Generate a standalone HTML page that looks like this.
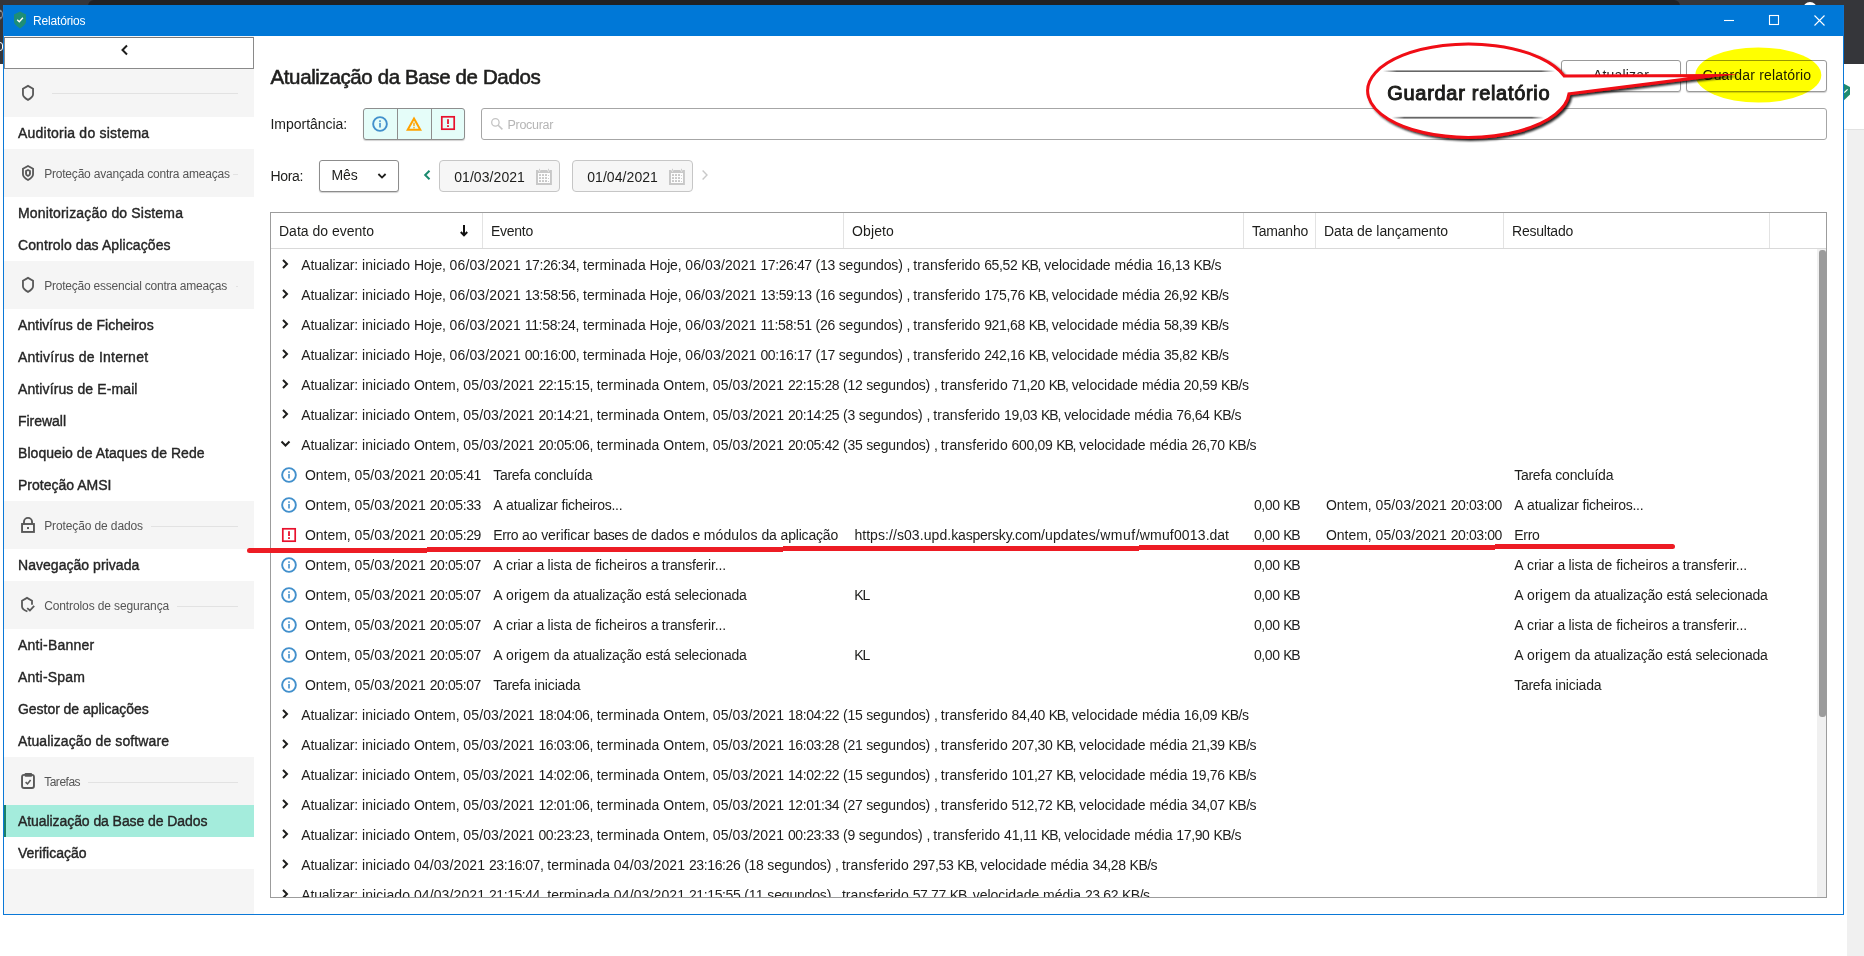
<!DOCTYPE html>
<html lang="pt">
<head>
<meta charset="utf-8">
<title>Relatórios</title>
<style>
*{box-sizing:border-box;margin:0;padding:0}
html,body{width:1864px;height:956px;overflow:hidden;background:#fff}
body{position:relative;font-family:"Liberation Sans",sans-serif;font-size:14px;color:#1d1d1b}
.abs{position:absolute}
.t{position:absolute;white-space:nowrap;line-height:20px;height:20px}
#bgtop{left:0;top:0;width:1864px;height:65px;background:#35363a}
#bgtop2{left:88px;top:0;width:1592px;height:6px;background:#202124;border-radius:8px 8px 0 0}
#bgright{left:1847px;top:130px;width:17px;height:826px;background:#f0f0f0}
#win{left:3px;top:5px;width:1841px;height:910px;background:#fff;border:1px solid #0a78d7}
#title{left:4px;top:5px;width:1839px;height:31px;background:#0078d7}
.ttl{color:#fff;font-size:12px}
#side{left:4px;top:36px;width:250px;height:878px;background:#f5f5f5}
#back{left:4px;top:37px;width:250px;height:32px;background:#fff;border:1px solid #8a8a8a;border-top-color:#777}
.wrow{position:absolute;left:4px;width:250px;background:#fff}
.item{font-size:14px;color:#262626;-webkit-text-stroke:0.38px #262626}
.sec{font-size:12px;color:#555}
.sline{position:absolute;height:1px;background:#e2e2e2}
#sel{left:4px;top:805px;width:250px;height:32px;background:#a4ecdc;border-left:2px solid #1a8068}
.h1{font-size:20.5px;-webkit-text-stroke:0.6px #262626;line-height:28px;height:28px;color:#1d1d1b}
.btn{position:absolute;background:#fff;border:1px solid #999;border-radius:3px;box-shadow:0 1px 1px rgba(0,0,0,.18)}
.gr{}
.big{font-size:20px;line-height:28px;height:28px;-webkit-text-stroke:1px #1d1d1b}
.ph{color:#b5b5b5;font-size:12.5px}
.date{font-size:14px}
#tbl{left:270px;top:212px;width:1557px;height:686px;border:1px solid #9c9c9c;background:#fff;overflow:hidden}
.hsep{position:absolute;top:213px;width:1px;height:35px;background:#e3e3e3}
</style>
</head>
<body>
<div id="bgtop" class="abs"></div>
<div id="bgtop2" class="abs"></div>
<div class="abs" style="left:0;top:64.3px;width:4px;height:892px;background:#fff"></div>
<div class="abs" style="left:1844px;top:64.3px;width:20px;height:66px;background:#fff"></div>
<div id="bgright" class="abs"></div>
<div class="abs" style="left:1844px;top:129px;width:20px;height:1px;background:#e2e2e2"></div>
<svg class="abs" style="left:1844px;top:82px" width="8" height="20" viewBox="1844 82 8 20"><path d="M1844 83.800 L1850 87 V94.500 L1844 100.300 Z" fill="#1e8a70"/><path d="M1844.300 92.600 L1847.600 89.400" stroke="#fff" stroke-width="1.200"/></svg>
<div class="abs" style="left:1803px;top:2px;width:14px;height:8px;background:#fff;border-radius:7px 7px 0 0"></div>
<div class="abs" style="left:-7px;top:8.500px;width:10px;height:11px;border:1.600px solid #8b8e93;border-radius:50%"></div>
<div class="abs" style="left:-5px;top:10px;width:6px;height:1.500px;background:#8b8e93"></div><div class="abs" style="left:-5px;top:16.500px;width:6px;height:1.500px;background:#8b8e93"></div>
<div class="abs" style="left:-6px;top:42px;width:9px;height:8.500px;border:1.500px solid #fff;border-radius:3px"></div>
<div id="win" class="abs"></div>
<div id="title" class="abs">
<svg class="abs" style="left:9px;top:6px" width="14" height="18" viewBox="0 0 14 18"><path d="M7 0.4 L13 3.4 V10.8 Q13 13.6 7 17.4 Q1 13.6 1 10.8 V3.4 Z" fill="#1e8e76"/><path d="M4.2 8.8 L6.3 10.8 L9.9 6.8" fill="none" stroke="#fff" stroke-width="1.4"/></svg>
<svg class="abs" style="left:1708px;top:0" width="127" height="31" viewBox="0 0 127 31"><g stroke="#fff" stroke-width="1.1" fill="none"><path d="M12 15.500 H22"/><rect x="57.500" y="10.500" width="9" height="9"/><path d="M102.500 10.500 L112.500 20.500 M112.500 10.500 L102.500 20.500"/></g></svg>
</div>
<div class="t ttl" style="left:33px;top:10.5px;letter-spacing:-0.163px;">Relatórios</div>
<div id="side" class="abs"></div>
<div id="back" class="abs"><svg class="abs" style="left:115px;top:6px" width="10" height="12" viewBox="0 0 10 12"><path d="M7 1.5 L2.5 6 L7 10.5" fill="none" stroke="#1d1d1b" stroke-width="2"/></svg></div>
<div class="wrow" style="top:117px;height:32px"></div>
<div class="wrow" style="top:197px;height:64px"></div>
<div class="wrow" style="top:309px;height:192px"></div>
<div class="wrow" style="top:549px;height:32px"></div>
<div class="wrow" style="top:629px;height:128px"></div>
<div class="wrow" style="top:837px;height:32px"></div>
<div id="sel" class="abs"></div>
<div class="t item" style="left:18px;top:123px;letter-spacing:0.223px;">Auditoria do sistema</div>
<div class="t item" style="left:18px;top:203px;letter-spacing:0.168px;">Monitorização do Sistema</div>
<div class="t item" style="left:18px;top:235px;letter-spacing:0.109px;">Controlo das Aplicações</div>
<div class="t item" style="left:18px;top:315px;letter-spacing:0.050px;">Antivírus de Ficheiros</div>
<div class="t item" style="left:18px;top:347px;letter-spacing:0.238px;">Antivírus de Internet</div>
<div class="t item" style="left:18px;top:379px;letter-spacing:0.111px;">Antivírus de E-mail</div>
<div class="t item" style="left:18px;top:411px;letter-spacing:-0.029px;">Firewall</div>
<div class="t item" style="left:18px;top:443px;letter-spacing:0.049px;">Bloqueio de Ataques de Rede</div>
<div class="t item" style="left:18px;top:475px;letter-spacing:0.008px;">Proteção AMSI</div>
<div class="t item" style="left:18px;top:555px;letter-spacing:0.039px;">Navegação privada</div>
<div class="t item" style="left:18px;top:635px;letter-spacing:0.233px;">Anti-Banner</div>
<div class="t item" style="left:18px;top:667px;letter-spacing:0.193px;">Anti-Spam</div>
<div class="t item" style="left:18px;top:699px;letter-spacing:-0.042px;">Gestor de aplicações</div>
<div class="t item" style="left:18px;top:731px;letter-spacing:0.107px;">Atualização de software</div>
<div class="t item" style="left:18px;top:811px;letter-spacing:-0.074px;">Atualização da Base de Dados</div>
<div class="t item" style="left:18px;top:843px;letter-spacing:0.001px;">Verificação</div>
<svg class="abs" style="left:20px;top:83px" width="16" height="18" viewBox="0 0 16 18"><path d="M8 2.9 L13.05 5.7 V11.2 Q13.05 14 8 16.9 Q2.95 14 2.95 11.2 V5.7 Z" fill="none" stroke="#585858" stroke-width="1.8" stroke-linejoin="miter"/></svg>
<div class="sline" style="left:52px;top:93px;width:186px"></div>
<svg class="abs" style="left:20px;top:164px" width="16" height="18" viewBox="0 0 16 18"><path d="M8 1.95 L13.05 4.75 V10.2 Q13.05 13 8 15.95 Q2.95 13 2.95 10.2 V4.75 Z" fill="none" stroke="#585858" stroke-width="1.8"/><path d="M8 6 L9.95 7 V10 Q9.95 11 8 12 Q6.05 11 6.05 10 V7 Z" fill="none" stroke="#585858" stroke-width="1.9"/></svg>
<div class="t sec" style="left:44.2px;top:164px;letter-spacing:-0.207px;">Proteção avançada contra ameaças</div>
<div class="sline" style="left:233px;top:174px;width:5px"></div>
<svg class="abs" style="left:20px;top:275px" width="16" height="18" viewBox="0 0 16 18"><path d="M8 2.9 L13.05 5.7 V11.2 Q13.05 14 8 16.9 Q2.95 14 2.95 11.2 V5.7 Z" fill="none" stroke="#585858" stroke-width="1.8" stroke-linejoin="miter"/></svg>
<div class="t sec" style="left:44.2px;top:276px;letter-spacing:-0.221px;">Proteção essencial contra ameaças</div>
<div class="sline" style="left:236px;top:286px;width:2px"></div>
<svg class="abs" style="left:20px;top:516px" width="16" height="18" viewBox="0 0 16 18"><rect x="2.05" y="8" width="11.9" height="7.95" fill="none" stroke="#585858" stroke-width="1.9"/><path d="M3.95 8 V5.95 A4.05 4.05 0 0 1 12.05 5.95 V8" fill="none" stroke="#585858" stroke-width="1.9"/><rect x="7" y="11.05" width="2" height="2" fill="#585858"/></svg>
<div class="t sec" style="left:44.2px;top:516px;letter-spacing:-0.115px;">Proteção de dados</div>
<div class="sline" style="left:151px;top:526px;width:87px"></div>
<svg class="abs" style="left:20px;top:596px" width="16" height="18" viewBox="0 0 16 18"><path d="M12 8.8 V4.8 L7 1.9 L2 4.8 V10.4 Q2 13.2 7.4 15.5" fill="none" stroke="#585858" stroke-width="1.8"/><path d="M7.2 12.1 L9.9 14.5 L14.2 9.9" fill="none" stroke="#585858" stroke-width="1.8"/></svg>
<div class="t sec" style="left:44.2px;top:596px;letter-spacing:-0.115px;">Controlos de segurança</div>
<div class="sline" style="left:177px;top:606px;width:61px"></div>
<svg class="abs" style="left:20px;top:772px" width="16" height="18" viewBox="0 0 16 18"><rect x="2.05" y="2.85" width="11.9" height="13.1" rx="2" fill="none" stroke="#585858" stroke-width="1.9"/><rect x="4.5" y="0.95" width="7.700" height="3.7" rx="1.2" fill="#585858"/><path d="M5.6 10.1 L7.5 11.9 L10.6 7.9" fill="none" stroke="#585858" stroke-width="1.6"/></svg>
<div class="t sec" style="left:44.2px;top:772px;letter-spacing:-0.494px;">Tarefas</div>
<div class="sline" style="left:88px;top:782px;width:150px"></div>
<div class="t h1" style="left:270.5px;top:63px;letter-spacing:-0.377px;">Atualização da Base de Dados</div>
<div class="t" style="left:270.5px;top:114px;letter-spacing:-0.029px;">Importância:</div>
<div class="t" style="left:270.5px;top:166px;letter-spacing:-0.347px;">Hora:</div>
<div class="btn" style="left:363px;top:108px;width:102px;height:32px;background:#e5fdf9;border-color:#8e8e8e"></div>
<div class="abs" style="left:397px;top:109px;width:1px;height:30px;background:#8e8e8e"></div>
<div class="abs" style="left:431px;top:109px;width:1px;height:30px;background:#8e8e8e"></div>
<svg class="abs" style="left:372px;top:116px" width="16" height="16" viewBox="0 0 16 16"><circle cx="8" cy="8" r="6.85" fill="none" stroke="#4290cc" stroke-width="1.9"/><rect x="7.2" y="6.9" width="1.6" height="4.6" fill="#4290cc"/><rect x="7.2" y="4.3" width="1.6" height="1.6" fill="#4290cc"/></svg>
<svg class="abs" style="left:406px;top:116px" width="16" height="16" viewBox="0 0 16 16"><path d="M8 2.6 L14.3 13.8 H1.7 Z" fill="none" stroke="#ffa200" stroke-width="2" stroke-linejoin="miter"/><rect x="7.300" y="6.6" width="1.4" height="3.600" fill="#ffa200"/><rect x="7.300" y="11" width="1.4" height="1.400" fill="#ffa200"/></svg>
<svg class="abs" style="left:440px;top:115px" width="16" height="16" viewBox="0 0 16 16"><rect x="1.8" y="1.8" width="12.4" height="12.4" fill="none" stroke="#e8112d" stroke-width="1.7"/><rect x="7.1" y="4.2" width="1.8" height="4.8" fill="#e8112d"/><rect x="7.1" y="10.200" width="1.8" height="1.8" fill="#e8112d"/></svg>
<div class="btn" style="left:481px;top:108px;width:1346px;height:32px;box-shadow:none;border-color:#a6a6a6"></div>
<svg class="abs" style="left:490.3px;top:117.3px" width="14" height="14" viewBox="0 0 14 14"><circle cx="5.4" cy="5.400" r="3.700" fill="none" stroke="#c4c4c4" stroke-width="1.300"/><path d="M8.200 8.200 L12.400 12.400" stroke="#c4c4c4" stroke-width="1.500"/></svg>
<div class="t ph" style="left:507.5px;top:114.5px;letter-spacing:-0.305px;">Procurar</div>
<div class="btn" style="left:319px;top:160px;width:80px;height:32px;border-color:#8c8c8c"></div>
<div class="t date" style="left:331.5px;top:165px;letter-spacing:-0.151px;">Mês</div>
<svg class="abs" style="left:376px;top:171px" width="12" height="10" viewBox="0 0 12 10"><path d="M2.4 3 L6 6.6 L9.6 3" fill="none" stroke="#1d1d1b" stroke-width="1.800"/></svg>
<svg class="abs" style="left:421px;top:168px" width="12" height="14" viewBox="0 0 12 14"><path d="M8.5 2.8 L4.2 7 L8.5 11.2" fill="none" stroke="#1a8a6f" stroke-width="2"/></svg>
<svg class="abs" style="left:699px;top:168px" width="12" height="14" viewBox="0 0 12 14"><path d="M3.600 2.400 L8 7 L3.600 11.600" fill="none" stroke="#c9c9c9" stroke-width="1.400"/></svg>
<div class="btn" style="left:439px;top:160px;width:121px;height:32px;background:#f6f6f6;border-color:#c6c6c6;box-shadow:none;border-radius:4px"></div>
<div class="t date" style="left:454.2px;top:167px;letter-spacing:0.072px;">01/03/2021</div>
<svg class="abs" style="left:536px;top:168px" width="16" height="17" viewBox="0 0 16 17"><path fill-rule="evenodd" d="M0 2.1 H15.9 V16.9 H0 Z M2 5 V15 H14 V5 Z" fill="#c8c8c8"/><path d="M2.2 2.1 H4.600 L3.400 4.1 Z M11.200 2.1 H13.600 L12.400 4.1 Z" fill="#f6f6f6"/><rect x="2" y="5" width="12" height="10" fill="#fdfdfd"/><rect x="3" y="0.8" width="0.900" height="2" fill="#c8c8c8"/><rect x="12" y="0.8" width="0.900" height="2" fill="#c8c8c8"/><g fill="#c8c8c8"><rect x="3" y="6.1" width="2" height="1.9"/><rect x="3" y="9.1" width="2" height="1.9"/><rect x="3" y="12.1" width="2" height="1.9"/><rect x="6" y="6.1" width="2" height="1.9"/><rect x="6" y="9.1" width="2" height="1.9"/><rect x="6" y="12.1" width="2" height="1.9"/><rect x="9" y="6.1" width="2" height="1.9"/><rect x="9" y="9.1" width="2" height="1.9"/><rect x="9" y="12.1" width="2" height="1.9"/><rect x="12" y="7.1" width="1" height="0.9"/><rect x="12" y="10.1" width="1" height="0.9"/><rect x="12" y="13.1" width="1" height="0.9"/></g></svg>
<div class="btn" style="left:572px;top:160px;width:121px;height:32px;background:#f6f6f6;border-color:#c6c6c6;box-shadow:none;border-radius:4px"></div>
<div class="t date" style="left:587.2px;top:167px;letter-spacing:0.072px;">01/04/2021</div>
<svg class="abs" style="left:669px;top:168px" width="16" height="17" viewBox="0 0 16 17"><path fill-rule="evenodd" d="M0 2.1 H15.9 V16.9 H0 Z M2 5 V15 H14 V5 Z" fill="#c8c8c8"/><path d="M2.2 2.1 H4.600 L3.400 4.1 Z M11.200 2.1 H13.600 L12.400 4.1 Z" fill="#f6f6f6"/><rect x="2" y="5" width="12" height="10" fill="#fdfdfd"/><rect x="3" y="0.8" width="0.900" height="2" fill="#c8c8c8"/><rect x="12" y="0.8" width="0.900" height="2" fill="#c8c8c8"/><g fill="#c8c8c8"><rect x="3" y="6.1" width="2" height="1.9"/><rect x="3" y="9.1" width="2" height="1.9"/><rect x="3" y="12.1" width="2" height="1.9"/><rect x="6" y="6.1" width="2" height="1.9"/><rect x="6" y="9.1" width="2" height="1.9"/><rect x="6" y="12.1" width="2" height="1.9"/><rect x="9" y="6.1" width="2" height="1.9"/><rect x="9" y="9.1" width="2" height="1.9"/><rect x="9" y="12.1" width="2" height="1.9"/><rect x="12" y="7.1" width="1" height="0.9"/><rect x="12" y="10.1" width="1" height="0.9"/><rect x="12" y="13.1" width="1" height="0.9"/></g></svg>
<div class="btn" style="left:1561px;top:60px;width:120px;height:32px"></div>
<div class="t" style="left:1593px;top:65px;letter-spacing:0.170px;">Atualizar</div>
<div id="tbl" class="abs"></div>
<div class="abs" style="left:271px;top:248px;width:1555px;height:1px;background:#d9d9d9"></div>
<div class="hsep" style="left:482px"></div>
<div class="hsep" style="left:843px"></div>
<div class="hsep" style="left:1243px"></div>
<div class="hsep" style="left:1315px"></div>
<div class="hsep" style="left:1503px"></div>
<div class="hsep" style="left:1769px"></div>
<div class="t" style="left:279px;top:221px;letter-spacing:0.002px;">Data do evento</div>
<div class="t" style="left:491px;top:221px;letter-spacing:-0.266px;">Evento</div>
<div class="t" style="left:852px;top:221px;letter-spacing:0.125px;">Objeto</div>
<div class="t" style="left:1252px;top:221px;letter-spacing:-0.228px;">Tamanho</div>
<div class="t" style="left:1324px;top:221px;letter-spacing:-0.073px;">Data de lançamento</div>
<div class="t" style="left:1512px;top:221px;letter-spacing:-0.227px;">Resultado</div>
<svg class="abs" style="left:458.5px;top:224px" width="10" height="14" viewBox="0 0 10 14"><path d="M5 1 V11.5 M1.8 8 L5 11.4 L8.200 8" fill="none" stroke="#111" stroke-width="2"/></svg>
<div class="abs" style="left:1817px;top:249px;width:9px;height:648px;background:#f0f0f0"></div>
<div class="abs" style="left:1819px;top:250px;width:7px;height:467px;background:#9b9b9b;border-radius:3px"></div>
<svg class="abs" style="left:280px;top:258px" width="11" height="12" viewBox="0 0 11 12"><path d="M3 2 L7 6 L3 10" fill="none" stroke="#1d1d1b" stroke-width="2"/></svg>
<div class="t" style="left:301.2px;top:255px;letter-spacing:-0.143px;">Atualizar:</div>
<div class="t" style="left:361.96px;top:255px;letter-spacing:0.077px;">iniciado</div>
<div class="t" style="left:413.89px;top:255px;letter-spacing:-0.160px;">Hoje,</div>
<div class="t" style="left:449.62px;top:255px;letter-spacing:0.121px;">06/03/2021</div>
<div class="t" style="left:524.75px;top:255px;letter-spacing:-0.445px;">17:26:34,</div>
<div class="t" style="left:582.97px;top:255px;letter-spacing:0.055px;">terminada</div>
<div class="t" style="left:649.57px;top:255px;letter-spacing:-0.160px;">Hoje,</div>
<div class="t" style="left:685.29px;top:255px;letter-spacing:0.122px;">06/03/2021</div>
<div class="t" style="left:760.42px;top:255px;letter-spacing:-0.392px;">17:26:47</div>
<div class="t" style="left:815.61px;top:255px;letter-spacing:-0.305px;">(13</div>
<div class="t" style="left:838.76px;top:255px;letter-spacing:-0.167px;">segundos)</div>
<div class="t" style="left:906.48px;top:255px;letter-spacing:-0.851px;">,</div>
<div class="t" style="left:913.35px;top:255px;letter-spacing:0.072px;">transferido</div>
<div class="t" style="left:984.14px;top:255px;letter-spacing:-0.365px;">65,52</div>
<div class="t" style="left:1021.2px;top:255px;letter-spacing:-1.133px;">KB,</div>
<div class="t" style="left:1044.21px;top:255px;letter-spacing:-0.055px;">velocidade</div>
<div class="t" style="left:1114.43px;top:255px;letter-spacing:-0.000px;">média</div>
<div class="t" style="left:1156.4px;top:255px;letter-spacing:-0.363px;">16,13</div>
<div class="t" style="left:1193.46px;top:255px;letter-spacing:-0.507px;">KB/s</div>
<svg class="abs" style="left:280px;top:288px" width="11" height="12" viewBox="0 0 11 12"><path d="M3 2 L7 6 L3 10" fill="none" stroke="#1d1d1b" stroke-width="2"/></svg>
<div class="t" style="left:301.2px;top:285px;letter-spacing:-0.143px;">Atualizar:</div>
<div class="t" style="left:361.96px;top:285px;letter-spacing:0.077px;">iniciado</div>
<div class="t" style="left:413.89px;top:285px;letter-spacing:-0.160px;">Hoje,</div>
<div class="t" style="left:449.62px;top:285px;letter-spacing:0.121px;">06/03/2021</div>
<div class="t" style="left:524.75px;top:285px;letter-spacing:-0.445px;">13:58:56,</div>
<div class="t" style="left:582.97px;top:285px;letter-spacing:0.055px;">terminada</div>
<div class="t" style="left:649.57px;top:285px;letter-spacing:-0.160px;">Hoje,</div>
<div class="t" style="left:685.29px;top:285px;letter-spacing:0.122px;">06/03/2021</div>
<div class="t" style="left:760.42px;top:285px;letter-spacing:-0.392px;">13:59:13</div>
<div class="t" style="left:815.61px;top:285px;letter-spacing:-0.305px;">(16</div>
<div class="t" style="left:838.76px;top:285px;letter-spacing:-0.167px;">segundos)</div>
<div class="t" style="left:906.48px;top:285px;letter-spacing:-0.851px;">,</div>
<div class="t" style="left:913.35px;top:285px;letter-spacing:0.072px;">transferido</div>
<div class="t" style="left:984.14px;top:285px;letter-spacing:-0.343px;">175,76</div>
<div class="t" style="left:1028.74px;top:285px;letter-spacing:-1.133px;">KB,</div>
<div class="t" style="left:1051.76px;top:285px;letter-spacing:-0.056px;">velocidade</div>
<div class="t" style="left:1121.98px;top:285px;letter-spacing:-0.000px;">média</div>
<div class="t" style="left:1163.95px;top:285px;letter-spacing:-0.365px;">26,92</div>
<div class="t" style="left:1201.01px;top:285px;letter-spacing:-0.507px;">KB/s</div>
<svg class="abs" style="left:280px;top:318px" width="11" height="12" viewBox="0 0 11 12"><path d="M3 2 L7 6 L3 10" fill="none" stroke="#1d1d1b" stroke-width="2"/></svg>
<div class="t" style="left:301.2px;top:315px;letter-spacing:-0.143px;">Atualizar:</div>
<div class="t" style="left:361.96px;top:315px;letter-spacing:0.077px;">iniciado</div>
<div class="t" style="left:413.89px;top:315px;letter-spacing:-0.160px;">Hoje,</div>
<div class="t" style="left:449.62px;top:315px;letter-spacing:0.121px;">06/03/2021</div>
<div class="t" style="left:524.75px;top:315px;letter-spacing:-0.330px;">11:58:24,</div>
<div class="t" style="left:582.97px;top:315px;letter-spacing:0.055px;">terminada</div>
<div class="t" style="left:649.57px;top:315px;letter-spacing:-0.160px;">Hoje,</div>
<div class="t" style="left:685.29px;top:315px;letter-spacing:0.122px;">06/03/2021</div>
<div class="t" style="left:760.42px;top:315px;letter-spacing:-0.264px;">11:58:51</div>
<div class="t" style="left:815.61px;top:315px;letter-spacing:-0.305px;">(26</div>
<div class="t" style="left:838.76px;top:315px;letter-spacing:-0.167px;">segundos)</div>
<div class="t" style="left:906.48px;top:315px;letter-spacing:-0.851px;">,</div>
<div class="t" style="left:913.35px;top:315px;letter-spacing:0.072px;">transferido</div>
<div class="t" style="left:984.14px;top:315px;letter-spacing:-0.343px;">921,68</div>
<div class="t" style="left:1028.74px;top:315px;letter-spacing:-1.133px;">KB,</div>
<div class="t" style="left:1051.76px;top:315px;letter-spacing:-0.056px;">velocidade</div>
<div class="t" style="left:1121.98px;top:315px;letter-spacing:-0.000px;">média</div>
<div class="t" style="left:1163.95px;top:315px;letter-spacing:-0.365px;">58,39</div>
<div class="t" style="left:1201.01px;top:315px;letter-spacing:-0.507px;">KB/s</div>
<svg class="abs" style="left:280px;top:348px" width="11" height="12" viewBox="0 0 11 12"><path d="M3 2 L7 6 L3 10" fill="none" stroke="#1d1d1b" stroke-width="2"/></svg>
<div class="t" style="left:301.2px;top:345px;letter-spacing:-0.143px;">Atualizar:</div>
<div class="t" style="left:361.96px;top:345px;letter-spacing:0.077px;">iniciado</div>
<div class="t" style="left:413.89px;top:345px;letter-spacing:-0.160px;">Hoje,</div>
<div class="t" style="left:449.62px;top:345px;letter-spacing:0.121px;">06/03/2021</div>
<div class="t" style="left:524.75px;top:345px;letter-spacing:-0.445px;">00:16:00,</div>
<div class="t" style="left:582.97px;top:345px;letter-spacing:0.055px;">terminada</div>
<div class="t" style="left:649.57px;top:345px;letter-spacing:-0.160px;">Hoje,</div>
<div class="t" style="left:685.29px;top:345px;letter-spacing:0.122px;">06/03/2021</div>
<div class="t" style="left:760.42px;top:345px;letter-spacing:-0.392px;">00:16:17</div>
<div class="t" style="left:815.61px;top:345px;letter-spacing:-0.305px;">(17</div>
<div class="t" style="left:838.76px;top:345px;letter-spacing:-0.167px;">segundos)</div>
<div class="t" style="left:906.48px;top:345px;letter-spacing:-0.851px;">,</div>
<div class="t" style="left:913.35px;top:345px;letter-spacing:0.072px;">transferido</div>
<div class="t" style="left:984.14px;top:345px;letter-spacing:-0.343px;">242,16</div>
<div class="t" style="left:1028.74px;top:345px;letter-spacing:-1.133px;">KB,</div>
<div class="t" style="left:1051.76px;top:345px;letter-spacing:-0.056px;">velocidade</div>
<div class="t" style="left:1121.98px;top:345px;letter-spacing:-0.000px;">média</div>
<div class="t" style="left:1163.95px;top:345px;letter-spacing:-0.365px;">35,82</div>
<div class="t" style="left:1201.01px;top:345px;letter-spacing:-0.507px;">KB/s</div>
<svg class="abs" style="left:280px;top:378px" width="11" height="12" viewBox="0 0 11 12"><path d="M3 2 L7 6 L3 10" fill="none" stroke="#1d1d1b" stroke-width="2"/></svg>
<div class="t" style="left:301.2px;top:375px;letter-spacing:-0.143px;">Atualizar:</div>
<div class="t" style="left:361.96px;top:375px;letter-spacing:0.077px;">iniciado</div>
<div class="t" style="left:413.89px;top:375px;letter-spacing:-0.048px;">Ontem,</div>
<div class="t" style="left:463.35px;top:375px;letter-spacing:0.122px;">05/03/2021</div>
<div class="t" style="left:538.48px;top:375px;letter-spacing:-0.445px;">22:15:15,</div>
<div class="t" style="left:596.7px;top:375px;letter-spacing:0.055px;">terminada</div>
<div class="t" style="left:663.3px;top:375px;letter-spacing:-0.048px;">Ontem,</div>
<div class="t" style="left:712.76px;top:375px;letter-spacing:0.122px;">05/03/2021</div>
<div class="t" style="left:787.89px;top:375px;letter-spacing:-0.394px;">22:15:28</div>
<div class="t" style="left:843.08px;top:375px;letter-spacing:-0.305px;">(12</div>
<div class="t" style="left:866.23px;top:375px;letter-spacing:-0.168px;">segundos)</div>
<div class="t" style="left:933.95px;top:375px;letter-spacing:-0.861px;">,</div>
<div class="t" style="left:940.82px;top:375px;letter-spacing:0.072px;">transferido</div>
<div class="t" style="left:1011.6px;top:375px;letter-spacing:-0.363px;">71,20</div>
<div class="t" style="left:1048.66px;top:375px;letter-spacing:-1.133px;">KB,</div>
<div class="t" style="left:1071.68px;top:375px;letter-spacing:-0.056px;">velocidade</div>
<div class="t" style="left:1141.9px;top:375px;letter-spacing:-0.002px;">média</div>
<div class="t" style="left:1183.87px;top:375px;letter-spacing:-0.365px;">20,59</div>
<div class="t" style="left:1220.93px;top:375px;letter-spacing:-0.507px;">KB/s</div>
<svg class="abs" style="left:280px;top:408px" width="11" height="12" viewBox="0 0 11 12"><path d="M3 2 L7 6 L3 10" fill="none" stroke="#1d1d1b" stroke-width="2"/></svg>
<div class="t" style="left:301.2px;top:405px;letter-spacing:-0.143px;">Atualizar:</div>
<div class="t" style="left:361.96px;top:405px;letter-spacing:0.077px;">iniciado</div>
<div class="t" style="left:413.89px;top:405px;letter-spacing:-0.048px;">Ontem,</div>
<div class="t" style="left:463.35px;top:405px;letter-spacing:0.122px;">05/03/2021</div>
<div class="t" style="left:538.48px;top:405px;letter-spacing:-0.445px;">20:14:21,</div>
<div class="t" style="left:596.7px;top:405px;letter-spacing:0.055px;">terminada</div>
<div class="t" style="left:663.3px;top:405px;letter-spacing:-0.048px;">Ontem,</div>
<div class="t" style="left:712.76px;top:405px;letter-spacing:0.122px;">05/03/2021</div>
<div class="t" style="left:787.89px;top:405px;letter-spacing:-0.394px;">20:14:25</div>
<div class="t" style="left:843.08px;top:405px;letter-spacing:-0.342px;">(3</div>
<div class="t" style="left:858.68px;top:405px;letter-spacing:-0.167px;">segundos)</div>
<div class="t" style="left:926.4px;top:405px;letter-spacing:-0.851px;">,</div>
<div class="t" style="left:933.27px;top:405px;letter-spacing:0.072px;">transferido</div>
<div class="t" style="left:1004.06px;top:405px;letter-spacing:-0.365px;">19,03</div>
<div class="t" style="left:1041.12px;top:405px;letter-spacing:-1.133px;">KB,</div>
<div class="t" style="left:1064.13px;top:405px;letter-spacing:-0.055px;">velocidade</div>
<div class="t" style="left:1134.35px;top:405px;letter-spacing:-0.000px;">média</div>
<div class="t" style="left:1176.32px;top:405px;letter-spacing:-0.363px;">76,64</div>
<div class="t" style="left:1213.38px;top:405px;letter-spacing:-0.507px;">KB/s</div>
<svg class="abs" style="left:280px;top:438px" width="11" height="12" viewBox="0 0 11 12"><path d="M1.500 3.500 L5.500 7.500 L9.500 3.500" fill="none" stroke="#1d1d1b" stroke-width="2"/></svg>
<div class="t" style="left:301.2px;top:435px;letter-spacing:-0.143px;">Atualizar:</div>
<div class="t" style="left:361.96px;top:435px;letter-spacing:0.077px;">iniciado</div>
<div class="t" style="left:413.89px;top:435px;letter-spacing:-0.048px;">Ontem,</div>
<div class="t" style="left:463.35px;top:435px;letter-spacing:0.122px;">05/03/2021</div>
<div class="t" style="left:538.48px;top:435px;letter-spacing:-0.445px;">20:05:06,</div>
<div class="t" style="left:596.7px;top:435px;letter-spacing:0.055px;">terminada</div>
<div class="t" style="left:663.3px;top:435px;letter-spacing:-0.048px;">Ontem,</div>
<div class="t" style="left:712.76px;top:435px;letter-spacing:0.122px;">05/03/2021</div>
<div class="t" style="left:787.89px;top:435px;letter-spacing:-0.394px;">20:05:42</div>
<div class="t" style="left:843.08px;top:435px;letter-spacing:-0.305px;">(35</div>
<div class="t" style="left:866.23px;top:435px;letter-spacing:-0.168px;">segundos)</div>
<div class="t" style="left:933.95px;top:435px;letter-spacing:-0.861px;">,</div>
<div class="t" style="left:940.82px;top:435px;letter-spacing:0.072px;">transferido</div>
<div class="t" style="left:1011.6px;top:435px;letter-spacing:-0.343px;">600,09</div>
<div class="t" style="left:1056.21px;top:435px;letter-spacing:-1.133px;">KB,</div>
<div class="t" style="left:1079.23px;top:435px;letter-spacing:-0.056px;">velocidade</div>
<div class="t" style="left:1149.44px;top:435px;letter-spacing:-0.000px;">média</div>
<div class="t" style="left:1191.42px;top:435px;letter-spacing:-0.365px;">26,70</div>
<div class="t" style="left:1228.47px;top:435px;letter-spacing:-0.507px;">KB/s</div>
<svg class="abs" style="left:281px;top:467px" width="16" height="16" viewBox="0 0 16 16"><circle cx="8" cy="8" r="6.85" fill="none" stroke="#4290cc" stroke-width="1.9"/><rect x="7.2" y="6.9" width="1.6" height="4.6" fill="#4290cc"/><rect x="7.2" y="4.3" width="1.6" height="1.6" fill="#4290cc"/></svg>
<div class="t" style="left:305px;top:465px;letter-spacing:-0.044px;">Ontem,</div>
<div class="t" style="left:354.47px;top:465px;letter-spacing:0.125px;">05/03/2021</div>
<div class="t" style="left:429.63px;top:465px;letter-spacing:-0.391px;">20:05:41</div>
<div class="t" style="left:493.2px;top:465px;letter-spacing:-0.259px;">Tarefa</div>
<div class="t" style="left:534.33px;top:465px;letter-spacing:-0.230px;">concluída</div>
<div class="t" style="left:1514.2px;top:465px;letter-spacing:-0.259px;">Tarefa</div>
<div class="t" style="left:1555.33px;top:465px;letter-spacing:-0.230px;">concluída</div>
<svg class="abs" style="left:281px;top:497px" width="16" height="16" viewBox="0 0 16 16"><circle cx="8" cy="8" r="6.85" fill="none" stroke="#4290cc" stroke-width="1.9"/><rect x="7.2" y="6.9" width="1.6" height="4.6" fill="#4290cc"/><rect x="7.2" y="4.3" width="1.6" height="1.6" fill="#4290cc"/></svg>
<div class="t" style="left:305px;top:495px;letter-spacing:-0.044px;">Ontem,</div>
<div class="t" style="left:354.47px;top:495px;letter-spacing:0.125px;">05/03/2021</div>
<div class="t" style="left:429.63px;top:495px;letter-spacing:-0.391px;">20:05:33</div>
<div class="t" style="left:493.2px;top:495px;letter-spacing:-0.354px;">A</div>
<div class="t" style="left:506.01px;top:495px;letter-spacing:-0.128px;">atualizar</div>
<div class="t" style="left:561.6px;top:495px;letter-spacing:-0.259px;">ficheiros...</div>
<div class="t" style="left:1254px;top:495px;letter-spacing:-0.445px;">0,00</div>
<div class="t" style="left:1283.28px;top:495px;letter-spacing:-1.334px;">KB</div>
<div class="t" style="left:1326px;top:495px;letter-spacing:-0.044px;">Ontem,</div>
<div class="t" style="left:1375.47px;top:495px;letter-spacing:0.125px;">05/03/2021</div>
<div class="t" style="left:1450.63px;top:495px;letter-spacing:-0.391px;">20:03:00</div>
<div class="t" style="left:1514.2px;top:495px;letter-spacing:-0.354px;">A</div>
<div class="t" style="left:1527.01px;top:495px;letter-spacing:-0.128px;">atualizar</div>
<div class="t" style="left:1582.6px;top:495px;letter-spacing:-0.259px;">ficheiros...</div>
<svg class="abs" style="left:281px;top:527px" width="16" height="16" viewBox="0 0 16 16"><rect x="1.8" y="1.8" width="12.4" height="12.4" fill="none" stroke="#e8112d" stroke-width="1.7"/><rect x="7.1" y="4.2" width="1.8" height="4.8" fill="#e8112d"/><rect x="7.1" y="10.200" width="1.8" height="1.8" fill="#e8112d"/></svg>
<div class="t" style="left:305px;top:525px;letter-spacing:-0.044px;">Ontem,</div>
<div class="t" style="left:354.47px;top:525px;letter-spacing:0.125px;">05/03/2021</div>
<div class="t" style="left:429.63px;top:525px;letter-spacing:-0.391px;">20:05:29</div>
<div class="t" style="left:493.2px;top:525px;letter-spacing:-0.371px;">Erro</div>
<div class="t" style="left:522px;top:525px;letter-spacing:-0.139px;">ao</div>
<div class="t" style="left:541.13px;top:525px;letter-spacing:-0.065px;">verificar</div>
<div class="t" style="left:593.39px;top:525px;letter-spacing:-0.572px;">bases</div>
<div class="t" style="left:631.72px;top:525px;letter-spacing:-0.024px;">de</div>
<div class="t" style="left:651.08px;top:525px;letter-spacing:-0.097px;">dados</div>
<div class="t" style="left:692.58px;top:525px;letter-spacing:-0.487px;">e</div>
<div class="t" style="left:703.72px;top:525px;letter-spacing:0.134px;">módulos</div>
<div class="t" style="left:761.41px;top:525px;letter-spacing:-0.124px;">da</div>
<div class="t" style="left:780.57px;top:525px;letter-spacing:-0.192px;">aplicação</div>
<div class="t" style="left:854.4px;top:525px;letter-spacing:0.048px;">https:</div>
<div class="t" style="left:888.94px;top:525px;letter-spacing:0.081px;">//s03.upd.</div>
<div class="t" style="left:951.25px;top:525px;letter-spacing:-0.201px;">kaspersky.com</div>
<div class="t" style="left:1040.97px;top:525px;letter-spacing:0.144px;">/updates</div>
<div class="t" style="left:1095.84px;top:525px;letter-spacing:0.505px;">/wmuf</div>
<div class="t" style="left:1135.71px;top:525px;letter-spacing:0.170px;">/wmuf0013</div>
<div class="t" style="left:1205.72px;top:525px;letter-spacing:-0.065px;">.dat</div>
<div class="t" style="left:1254px;top:525px;letter-spacing:-0.445px;">0,00</div>
<div class="t" style="left:1283.28px;top:525px;letter-spacing:-1.334px;">KB</div>
<div class="t" style="left:1326px;top:525px;letter-spacing:-0.044px;">Ontem,</div>
<div class="t" style="left:1375.47px;top:525px;letter-spacing:0.125px;">05/03/2021</div>
<div class="t" style="left:1450.63px;top:525px;letter-spacing:-0.391px;">20:03:00</div>
<div class="t" style="left:1514.2px;top:525px;letter-spacing:-0.263px;">Erro</div>
<svg class="abs" style="left:281px;top:557px" width="16" height="16" viewBox="0 0 16 16"><circle cx="8" cy="8" r="6.85" fill="none" stroke="#4290cc" stroke-width="1.9"/><rect x="7.2" y="6.9" width="1.6" height="4.6" fill="#4290cc"/><rect x="7.2" y="4.3" width="1.6" height="1.6" fill="#4290cc"/></svg>
<div class="t" style="left:305px;top:555px;letter-spacing:-0.044px;">Ontem,</div>
<div class="t" style="left:354.47px;top:555px;letter-spacing:0.125px;">05/03/2021</div>
<div class="t" style="left:429.63px;top:555px;letter-spacing:-0.391px;">20:05:07</div>
<div class="t" style="left:493.2px;top:555px;letter-spacing:-0.334px;">A</div>
<div class="t" style="left:506.04px;top:555px;letter-spacing:-0.119px;">criar</div>
<div class="t" style="left:536.51px;top:555px;letter-spacing:-0.687px;">a</div>
<div class="t" style="left:547.44px;top:555px;letter-spacing:-0.073px;">lista</div>
<div class="t" style="left:575.81px;top:555px;letter-spacing:-0.029px;">de</div>
<div class="t" style="left:595.15px;top:555px;letter-spacing:-0.045px;">ficheiros</div>
<div class="t" style="left:650.72px;top:555px;letter-spacing:-0.687px;">a</div>
<div class="t" style="left:661.65px;top:555px;letter-spacing:-0.138px;">transferir...</div>
<div class="t" style="left:1254px;top:555px;letter-spacing:-0.445px;">0,00</div>
<div class="t" style="left:1283.28px;top:555px;letter-spacing:-1.334px;">KB</div>
<div class="t" style="left:1514.2px;top:555px;letter-spacing:-0.334px;">A</div>
<div class="t" style="left:1527.04px;top:555px;letter-spacing:-0.119px;">criar</div>
<div class="t" style="left:1557.51px;top:555px;letter-spacing:-0.687px;">a</div>
<div class="t" style="left:1568.44px;top:555px;letter-spacing:-0.073px;">lista</div>
<div class="t" style="left:1596.81px;top:555px;letter-spacing:-0.029px;">de</div>
<div class="t" style="left:1616.15px;top:555px;letter-spacing:-0.045px;">ficheiros</div>
<div class="t" style="left:1671.72px;top:555px;letter-spacing:-0.687px;">a</div>
<div class="t" style="left:1682.65px;top:555px;letter-spacing:-0.138px;">transferir...</div>
<svg class="abs" style="left:281px;top:587px" width="16" height="16" viewBox="0 0 16 16"><circle cx="8" cy="8" r="6.85" fill="none" stroke="#4290cc" stroke-width="1.9"/><rect x="7.2" y="6.9" width="1.6" height="4.6" fill="#4290cc"/><rect x="7.2" y="4.3" width="1.6" height="1.6" fill="#4290cc"/></svg>
<div class="t" style="left:305px;top:585px;letter-spacing:-0.044px;">Ontem,</div>
<div class="t" style="left:354.47px;top:585px;letter-spacing:0.125px;">05/03/2021</div>
<div class="t" style="left:429.63px;top:585px;letter-spacing:-0.391px;">20:05:07</div>
<div class="t" style="left:493.2px;top:585px;letter-spacing:-0.334px;">A</div>
<div class="t" style="left:506.03px;top:585px;letter-spacing:0.194px;">origem</div>
<div class="t" style="left:553.81px;top:585px;letter-spacing:-0.134px;">da</div>
<div class="t" style="left:572.95px;top:585px;letter-spacing:-0.191px;">atualização</div>
<div class="t" style="left:645.51px;top:585px;letter-spacing:-0.352px;">está</div>
<div class="t" style="left:674.39px;top:585px;letter-spacing:-0.229px;">selecionada</div>
<div class="t" style="left:854.3px;top:585px;letter-spacing:-1.212px;">KL</div>
<div class="t" style="left:1254px;top:585px;letter-spacing:-0.445px;">0,00</div>
<div class="t" style="left:1283.28px;top:585px;letter-spacing:-1.334px;">KB</div>
<div class="t" style="left:1514.2px;top:585px;letter-spacing:-0.334px;">A</div>
<div class="t" style="left:1527.03px;top:585px;letter-spacing:0.194px;">origem</div>
<div class="t" style="left:1574.81px;top:585px;letter-spacing:-0.134px;">da</div>
<div class="t" style="left:1593.95px;top:585px;letter-spacing:-0.191px;">atualização</div>
<div class="t" style="left:1666.51px;top:585px;letter-spacing:-0.352px;">está</div>
<div class="t" style="left:1695.39px;top:585px;letter-spacing:-0.229px;">selecionada</div>
<svg class="abs" style="left:281px;top:617px" width="16" height="16" viewBox="0 0 16 16"><circle cx="8" cy="8" r="6.85" fill="none" stroke="#4290cc" stroke-width="1.9"/><rect x="7.2" y="6.9" width="1.6" height="4.6" fill="#4290cc"/><rect x="7.2" y="4.3" width="1.6" height="1.6" fill="#4290cc"/></svg>
<div class="t" style="left:305px;top:615px;letter-spacing:-0.044px;">Ontem,</div>
<div class="t" style="left:354.47px;top:615px;letter-spacing:0.125px;">05/03/2021</div>
<div class="t" style="left:429.63px;top:615px;letter-spacing:-0.391px;">20:05:07</div>
<div class="t" style="left:493.2px;top:615px;letter-spacing:-0.334px;">A</div>
<div class="t" style="left:506.04px;top:615px;letter-spacing:-0.119px;">criar</div>
<div class="t" style="left:536.51px;top:615px;letter-spacing:-0.687px;">a</div>
<div class="t" style="left:547.44px;top:615px;letter-spacing:-0.073px;">lista</div>
<div class="t" style="left:575.81px;top:615px;letter-spacing:-0.029px;">de</div>
<div class="t" style="left:595.15px;top:615px;letter-spacing:-0.045px;">ficheiros</div>
<div class="t" style="left:650.72px;top:615px;letter-spacing:-0.687px;">a</div>
<div class="t" style="left:661.65px;top:615px;letter-spacing:-0.138px;">transferir...</div>
<div class="t" style="left:1254px;top:615px;letter-spacing:-0.445px;">0,00</div>
<div class="t" style="left:1283.28px;top:615px;letter-spacing:-1.334px;">KB</div>
<div class="t" style="left:1514.2px;top:615px;letter-spacing:-0.334px;">A</div>
<div class="t" style="left:1527.04px;top:615px;letter-spacing:-0.119px;">criar</div>
<div class="t" style="left:1557.51px;top:615px;letter-spacing:-0.687px;">a</div>
<div class="t" style="left:1568.44px;top:615px;letter-spacing:-0.073px;">lista</div>
<div class="t" style="left:1596.81px;top:615px;letter-spacing:-0.029px;">de</div>
<div class="t" style="left:1616.15px;top:615px;letter-spacing:-0.045px;">ficheiros</div>
<div class="t" style="left:1671.72px;top:615px;letter-spacing:-0.687px;">a</div>
<div class="t" style="left:1682.65px;top:615px;letter-spacing:-0.138px;">transferir...</div>
<svg class="abs" style="left:281px;top:647px" width="16" height="16" viewBox="0 0 16 16"><circle cx="8" cy="8" r="6.85" fill="none" stroke="#4290cc" stroke-width="1.9"/><rect x="7.2" y="6.9" width="1.6" height="4.6" fill="#4290cc"/><rect x="7.2" y="4.3" width="1.6" height="1.6" fill="#4290cc"/></svg>
<div class="t" style="left:305px;top:645px;letter-spacing:-0.044px;">Ontem,</div>
<div class="t" style="left:354.47px;top:645px;letter-spacing:0.125px;">05/03/2021</div>
<div class="t" style="left:429.63px;top:645px;letter-spacing:-0.391px;">20:05:07</div>
<div class="t" style="left:493.2px;top:645px;letter-spacing:-0.334px;">A</div>
<div class="t" style="left:506.03px;top:645px;letter-spacing:0.194px;">origem</div>
<div class="t" style="left:553.81px;top:645px;letter-spacing:-0.134px;">da</div>
<div class="t" style="left:572.95px;top:645px;letter-spacing:-0.191px;">atualização</div>
<div class="t" style="left:645.51px;top:645px;letter-spacing:-0.352px;">está</div>
<div class="t" style="left:674.39px;top:645px;letter-spacing:-0.229px;">selecionada</div>
<div class="t" style="left:854.3px;top:645px;letter-spacing:-1.212px;">KL</div>
<div class="t" style="left:1254px;top:645px;letter-spacing:-0.445px;">0,00</div>
<div class="t" style="left:1283.28px;top:645px;letter-spacing:-1.334px;">KB</div>
<div class="t" style="left:1514.2px;top:645px;letter-spacing:-0.334px;">A</div>
<div class="t" style="left:1527.03px;top:645px;letter-spacing:0.194px;">origem</div>
<div class="t" style="left:1574.81px;top:645px;letter-spacing:-0.134px;">da</div>
<div class="t" style="left:1593.95px;top:645px;letter-spacing:-0.191px;">atualização</div>
<div class="t" style="left:1666.51px;top:645px;letter-spacing:-0.352px;">está</div>
<div class="t" style="left:1695.39px;top:645px;letter-spacing:-0.229px;">selecionada</div>
<svg class="abs" style="left:281px;top:677px" width="16" height="16" viewBox="0 0 16 16"><circle cx="8" cy="8" r="6.85" fill="none" stroke="#4290cc" stroke-width="1.9"/><rect x="7.2" y="6.9" width="1.6" height="4.6" fill="#4290cc"/><rect x="7.2" y="4.3" width="1.6" height="1.6" fill="#4290cc"/></svg>
<div class="t" style="left:305px;top:675px;letter-spacing:-0.044px;">Ontem,</div>
<div class="t" style="left:354.47px;top:675px;letter-spacing:0.125px;">05/03/2021</div>
<div class="t" style="left:429.63px;top:675px;letter-spacing:-0.391px;">20:05:07</div>
<div class="t" style="left:493.2px;top:675px;letter-spacing:-0.257px;">Tarefa</div>
<div class="t" style="left:534.33px;top:675px;letter-spacing:-0.177px;">iniciada</div>
<div class="t" style="left:1514.2px;top:675px;letter-spacing:-0.257px;">Tarefa</div>
<div class="t" style="left:1555.33px;top:675px;letter-spacing:-0.177px;">iniciada</div>
<svg class="abs" style="left:280px;top:708px" width="11" height="12" viewBox="0 0 11 12"><path d="M3 2 L7 6 L3 10" fill="none" stroke="#1d1d1b" stroke-width="2"/></svg>
<div class="t" style="left:301.2px;top:705px;letter-spacing:-0.143px;">Atualizar:</div>
<div class="t" style="left:361.96px;top:705px;letter-spacing:0.077px;">iniciado</div>
<div class="t" style="left:413.89px;top:705px;letter-spacing:-0.048px;">Ontem,</div>
<div class="t" style="left:463.35px;top:705px;letter-spacing:0.122px;">05/03/2021</div>
<div class="t" style="left:538.48px;top:705px;letter-spacing:-0.445px;">18:04:06,</div>
<div class="t" style="left:596.7px;top:705px;letter-spacing:0.055px;">terminada</div>
<div class="t" style="left:663.3px;top:705px;letter-spacing:-0.048px;">Ontem,</div>
<div class="t" style="left:712.76px;top:705px;letter-spacing:0.122px;">05/03/2021</div>
<div class="t" style="left:787.89px;top:705px;letter-spacing:-0.394px;">18:04:22</div>
<div class="t" style="left:843.08px;top:705px;letter-spacing:-0.305px;">(15</div>
<div class="t" style="left:866.23px;top:705px;letter-spacing:-0.168px;">segundos)</div>
<div class="t" style="left:933.95px;top:705px;letter-spacing:-0.861px;">,</div>
<div class="t" style="left:940.82px;top:705px;letter-spacing:0.072px;">transferido</div>
<div class="t" style="left:1011.6px;top:705px;letter-spacing:-0.363px;">84,40</div>
<div class="t" style="left:1048.66px;top:705px;letter-spacing:-1.133px;">KB,</div>
<div class="t" style="left:1071.68px;top:705px;letter-spacing:-0.056px;">velocidade</div>
<div class="t" style="left:1141.9px;top:705px;letter-spacing:-0.002px;">média</div>
<div class="t" style="left:1183.87px;top:705px;letter-spacing:-0.365px;">16,09</div>
<div class="t" style="left:1220.93px;top:705px;letter-spacing:-0.507px;">KB/s</div>
<svg class="abs" style="left:280px;top:738px" width="11" height="12" viewBox="0 0 11 12"><path d="M3 2 L7 6 L3 10" fill="none" stroke="#1d1d1b" stroke-width="2"/></svg>
<div class="t" style="left:301.2px;top:735px;letter-spacing:-0.143px;">Atualizar:</div>
<div class="t" style="left:361.96px;top:735px;letter-spacing:0.077px;">iniciado</div>
<div class="t" style="left:413.89px;top:735px;letter-spacing:-0.048px;">Ontem,</div>
<div class="t" style="left:463.35px;top:735px;letter-spacing:0.122px;">05/03/2021</div>
<div class="t" style="left:538.48px;top:735px;letter-spacing:-0.445px;">16:03:06,</div>
<div class="t" style="left:596.7px;top:735px;letter-spacing:0.055px;">terminada</div>
<div class="t" style="left:663.3px;top:735px;letter-spacing:-0.048px;">Ontem,</div>
<div class="t" style="left:712.76px;top:735px;letter-spacing:0.122px;">05/03/2021</div>
<div class="t" style="left:787.89px;top:735px;letter-spacing:-0.394px;">16:03:28</div>
<div class="t" style="left:843.08px;top:735px;letter-spacing:-0.305px;">(21</div>
<div class="t" style="left:866.23px;top:735px;letter-spacing:-0.168px;">segundos)</div>
<div class="t" style="left:933.95px;top:735px;letter-spacing:-0.861px;">,</div>
<div class="t" style="left:940.82px;top:735px;letter-spacing:0.072px;">transferido</div>
<div class="t" style="left:1011.6px;top:735px;letter-spacing:-0.343px;">207,30</div>
<div class="t" style="left:1056.21px;top:735px;letter-spacing:-1.133px;">KB,</div>
<div class="t" style="left:1079.23px;top:735px;letter-spacing:-0.056px;">velocidade</div>
<div class="t" style="left:1149.44px;top:735px;letter-spacing:-0.000px;">média</div>
<div class="t" style="left:1191.42px;top:735px;letter-spacing:-0.365px;">21,39</div>
<div class="t" style="left:1228.47px;top:735px;letter-spacing:-0.507px;">KB/s</div>
<svg class="abs" style="left:280px;top:768px" width="11" height="12" viewBox="0 0 11 12"><path d="M3 2 L7 6 L3 10" fill="none" stroke="#1d1d1b" stroke-width="2"/></svg>
<div class="t" style="left:301.2px;top:765px;letter-spacing:-0.143px;">Atualizar:</div>
<div class="t" style="left:361.96px;top:765px;letter-spacing:0.077px;">iniciado</div>
<div class="t" style="left:413.89px;top:765px;letter-spacing:-0.048px;">Ontem,</div>
<div class="t" style="left:463.35px;top:765px;letter-spacing:0.122px;">05/03/2021</div>
<div class="t" style="left:538.48px;top:765px;letter-spacing:-0.445px;">14:02:06,</div>
<div class="t" style="left:596.7px;top:765px;letter-spacing:0.055px;">terminada</div>
<div class="t" style="left:663.3px;top:765px;letter-spacing:-0.048px;">Ontem,</div>
<div class="t" style="left:712.76px;top:765px;letter-spacing:0.122px;">05/03/2021</div>
<div class="t" style="left:787.89px;top:765px;letter-spacing:-0.394px;">14:02:22</div>
<div class="t" style="left:843.08px;top:765px;letter-spacing:-0.305px;">(15</div>
<div class="t" style="left:866.23px;top:765px;letter-spacing:-0.168px;">segundos)</div>
<div class="t" style="left:933.95px;top:765px;letter-spacing:-0.861px;">,</div>
<div class="t" style="left:940.82px;top:765px;letter-spacing:0.072px;">transferido</div>
<div class="t" style="left:1011.6px;top:765px;letter-spacing:-0.343px;">101,27</div>
<div class="t" style="left:1056.21px;top:765px;letter-spacing:-1.133px;">KB,</div>
<div class="t" style="left:1079.23px;top:765px;letter-spacing:-0.056px;">velocidade</div>
<div class="t" style="left:1149.44px;top:765px;letter-spacing:-0.000px;">média</div>
<div class="t" style="left:1191.42px;top:765px;letter-spacing:-0.365px;">19,76</div>
<div class="t" style="left:1228.47px;top:765px;letter-spacing:-0.507px;">KB/s</div>
<svg class="abs" style="left:280px;top:798px" width="11" height="12" viewBox="0 0 11 12"><path d="M3 2 L7 6 L3 10" fill="none" stroke="#1d1d1b" stroke-width="2"/></svg>
<div class="t" style="left:301.2px;top:795px;letter-spacing:-0.143px;">Atualizar:</div>
<div class="t" style="left:361.96px;top:795px;letter-spacing:0.077px;">iniciado</div>
<div class="t" style="left:413.89px;top:795px;letter-spacing:-0.048px;">Ontem,</div>
<div class="t" style="left:463.35px;top:795px;letter-spacing:0.122px;">05/03/2021</div>
<div class="t" style="left:538.48px;top:795px;letter-spacing:-0.445px;">12:01:06,</div>
<div class="t" style="left:596.7px;top:795px;letter-spacing:0.055px;">terminada</div>
<div class="t" style="left:663.3px;top:795px;letter-spacing:-0.048px;">Ontem,</div>
<div class="t" style="left:712.76px;top:795px;letter-spacing:0.122px;">05/03/2021</div>
<div class="t" style="left:787.89px;top:795px;letter-spacing:-0.394px;">12:01:34</div>
<div class="t" style="left:843.08px;top:795px;letter-spacing:-0.305px;">(27</div>
<div class="t" style="left:866.23px;top:795px;letter-spacing:-0.168px;">segundos)</div>
<div class="t" style="left:933.95px;top:795px;letter-spacing:-0.861px;">,</div>
<div class="t" style="left:940.82px;top:795px;letter-spacing:0.072px;">transferido</div>
<div class="t" style="left:1011.6px;top:795px;letter-spacing:-0.343px;">512,72</div>
<div class="t" style="left:1056.21px;top:795px;letter-spacing:-1.133px;">KB,</div>
<div class="t" style="left:1079.23px;top:795px;letter-spacing:-0.056px;">velocidade</div>
<div class="t" style="left:1149.44px;top:795px;letter-spacing:-0.000px;">média</div>
<div class="t" style="left:1191.42px;top:795px;letter-spacing:-0.365px;">34,07</div>
<div class="t" style="left:1228.47px;top:795px;letter-spacing:-0.507px;">KB/s</div>
<svg class="abs" style="left:280px;top:828px" width="11" height="12" viewBox="0 0 11 12"><path d="M3 2 L7 6 L3 10" fill="none" stroke="#1d1d1b" stroke-width="2"/></svg>
<div class="t" style="left:301.2px;top:825px;letter-spacing:-0.143px;">Atualizar:</div>
<div class="t" style="left:361.96px;top:825px;letter-spacing:0.077px;">iniciado</div>
<div class="t" style="left:413.89px;top:825px;letter-spacing:-0.048px;">Ontem,</div>
<div class="t" style="left:463.35px;top:825px;letter-spacing:0.122px;">05/03/2021</div>
<div class="t" style="left:538.48px;top:825px;letter-spacing:-0.445px;">00:23:23,</div>
<div class="t" style="left:596.7px;top:825px;letter-spacing:0.055px;">terminada</div>
<div class="t" style="left:663.3px;top:825px;letter-spacing:-0.048px;">Ontem,</div>
<div class="t" style="left:712.76px;top:825px;letter-spacing:0.122px;">05/03/2021</div>
<div class="t" style="left:787.89px;top:825px;letter-spacing:-0.394px;">00:23:33</div>
<div class="t" style="left:843.08px;top:825px;letter-spacing:-0.342px;">(9</div>
<div class="t" style="left:858.68px;top:825px;letter-spacing:-0.167px;">segundos)</div>
<div class="t" style="left:926.4px;top:825px;letter-spacing:-0.851px;">,</div>
<div class="t" style="left:933.27px;top:825px;letter-spacing:0.072px;">transferido</div>
<div class="t" style="left:1004.06px;top:825px;letter-spacing:-0.156px;">41,11</div>
<div class="t" style="left:1041.12px;top:825px;letter-spacing:-1.133px;">KB,</div>
<div class="t" style="left:1064.13px;top:825px;letter-spacing:-0.055px;">velocidade</div>
<div class="t" style="left:1134.35px;top:825px;letter-spacing:-0.000px;">média</div>
<div class="t" style="left:1176.32px;top:825px;letter-spacing:-0.363px;">17,90</div>
<div class="t" style="left:1213.38px;top:825px;letter-spacing:-0.507px;">KB/s</div>
<svg class="abs" style="left:280px;top:858px" width="11" height="12" viewBox="0 0 11 12"><path d="M3 2 L7 6 L3 10" fill="none" stroke="#1d1d1b" stroke-width="2"/></svg>
<div class="t" style="left:301.2px;top:855px;letter-spacing:-0.143px;">Atualizar:</div>
<div class="t" style="left:361.96px;top:855px;letter-spacing:0.077px;">iniciado</div>
<div class="t" style="left:413.89px;top:855px;letter-spacing:0.122px;">04/03/2021</div>
<div class="t" style="left:489.02px;top:855px;letter-spacing:-0.445px;">23:16:07,</div>
<div class="t" style="left:547.25px;top:855px;letter-spacing:0.055px;">terminada</div>
<div class="t" style="left:613.84px;top:855px;letter-spacing:0.122px;">04/03/2021</div>
<div class="t" style="left:688.98px;top:855px;letter-spacing:-0.394px;">23:16:26</div>
<div class="t" style="left:744.16px;top:855px;letter-spacing:-0.305px;">(18</div>
<div class="t" style="left:767.32px;top:855px;letter-spacing:-0.168px;">segundos)</div>
<div class="t" style="left:835.03px;top:855px;letter-spacing:-0.851px;">,</div>
<div class="t" style="left:841.9px;top:855px;letter-spacing:0.072px;">transferido</div>
<div class="t" style="left:912.69px;top:855px;letter-spacing:-0.343px;">297,53</div>
<div class="t" style="left:957.29px;top:855px;letter-spacing:-1.133px;">KB,</div>
<div class="t" style="left:980.31px;top:855px;letter-spacing:-0.056px;">velocidade</div>
<div class="t" style="left:1050.53px;top:855px;letter-spacing:-0.000px;">média</div>
<div class="t" style="left:1092.5px;top:855px;letter-spacing:-0.365px;">34,28</div>
<div class="t" style="left:1129.56px;top:855px;letter-spacing:-0.507px;">KB/s</div>
<svg class="abs" style="left:280px;top:888px" width="11" height="12" viewBox="0 0 11 12"><path d="M3 2 L7 6 L3 10" fill="none" stroke="#1d1d1b" stroke-width="2"/></svg>
<div class="t" style="left:301.2px;top:885px;letter-spacing:-0.143px;">Atualizar:</div>
<div class="t" style="left:361.96px;top:885px;letter-spacing:0.077px;">iniciado</div>
<div class="t" style="left:413.89px;top:885px;letter-spacing:0.122px;">04/03/2021</div>
<div class="t" style="left:489.02px;top:885px;letter-spacing:-0.445px;">21:15:44,</div>
<div class="t" style="left:547.25px;top:885px;letter-spacing:0.055px;">terminada</div>
<div class="t" style="left:613.84px;top:885px;letter-spacing:0.122px;">04/03/2021</div>
<div class="t" style="left:688.98px;top:885px;letter-spacing:-0.394px;">21:15:55</div>
<div class="t" style="left:744.16px;top:885px;letter-spacing:0.039px;">(11</div>
<div class="t" style="left:767.32px;top:885px;letter-spacing:-0.168px;">segundos)</div>
<div class="t" style="left:835.03px;top:885px;letter-spacing:-0.851px;">,</div>
<div class="t" style="left:841.9px;top:885px;letter-spacing:0.072px;">transferido</div>
<div class="t" style="left:912.69px;top:885px;letter-spacing:-0.365px;">57,77</div>
<div class="t" style="left:949.75px;top:885px;letter-spacing:-1.133px;">KB,</div>
<div class="t" style="left:972.76px;top:885px;letter-spacing:-0.055px;">velocidade</div>
<div class="t" style="left:1042.98px;top:885px;letter-spacing:-0.000px;">média</div>
<div class="t" style="left:1084.95px;top:885px;letter-spacing:-0.363px;">23,62</div>
<div class="t" style="left:1122.01px;top:885px;letter-spacing:-0.507px;">KB/s</div>
<div class="abs" style="left:271px;top:897px;width:1555px;height:1px;background:#9c9c9c"></div>
<div class="abs" style="left:255px;top:898px;width:1588px;height:16px;background:#fff"></div>
<div class="abs" style="left:1686px;top:60px;width:141px;height:32px;background:#fff;border-radius:3px"></div>
<div class="btn" style="left:1686px;top:60px;width:141px;height:32px"></div>
<div class="t gr" style="left:1702.6px;top:65.3px;letter-spacing:0.163px;">Guardar relatório</div>
<svg class="abs" style="left:1680px;top:40px;mix-blend-mode:multiply" width="160" height="70" viewBox="1680 40 160 70"><ellipse cx="1758.3" cy="75" rx="63" ry="27.6" fill="#ffff00"/></svg>
<svg class="abs" style="left:1340px;top:30px;overflow:visible" width="420" height="125" viewBox="1340 30 420 125">
<defs>
<filter id="sh" x="-10%" y="-20%" width="125%" height="150%"><feGaussianBlur in="SourceAlpha" stdDeviation="1.3"/><feOffset dx="2" dy="2.2"/><feComponentTransfer><feFuncA type="linear" slope="0.85"/></feComponentTransfer><feMerge><feMergeNode/><feMergeNode in="SourceGraphic"/></feMerge></filter>
<clipPath id="cp"><ellipse cx="1467.5" cy="90.4" rx="98" ry="45.5"/></clipPath>
<linearGradient id="lg" x1="0" x2="1" y1="0" y2="0"><stop offset="0" stop-color="#666" stop-opacity="0"/><stop offset="0.080" stop-color="#666"/><stop offset="0.920" stop-color="#666"/><stop offset="1" stop-color="#666" stop-opacity="0"/></linearGradient><filter id="bl"><feGaussianBlur stdDeviation="0.6"/></filter>
</defs>
<path d="M1564.1 76 L1714 75.600 L1569 93.8 A100.800 46.700 0 1 1 1564.1 76 Z" fill="#fff" stroke="#f00a12" stroke-width="3" stroke-linejoin="miter" stroke-miterlimit="30" filter="url(#sh)"/>
<g filter="url(#bl)"><rect x="1383" y="70.400" width="172" height="1.600" fill="url(#lg)"/><rect x="1392" y="116.800" width="152" height="1.800" fill="url(#lg)"/></g>
</svg>
<div class="t big" style="left:1387.3px;top:79.3px;letter-spacing:0.695px;">Guardar relatório</div>
<svg class="abs" style="left:240px;top:540px" width="1445" height="16" viewBox="240 540 1445 16"><g fill="#ed1c24" shape-rendering="crispEdges"><rect x="249" y="548" width="178" height="5"/><rect x="427" y="547" width="356" height="5"/><rect x="783" y="546" width="356" height="5"/><rect x="1139" y="545" width="356" height="5"/><rect x="1495" y="544" width="178" height="5"/></g><circle cx="249.500" cy="550.500" r="2.500" fill="#ed1c24"/><circle cx="1672.500" cy="546.500" r="2.500" fill="#ed1c24"/></svg>
</body>
</html>
